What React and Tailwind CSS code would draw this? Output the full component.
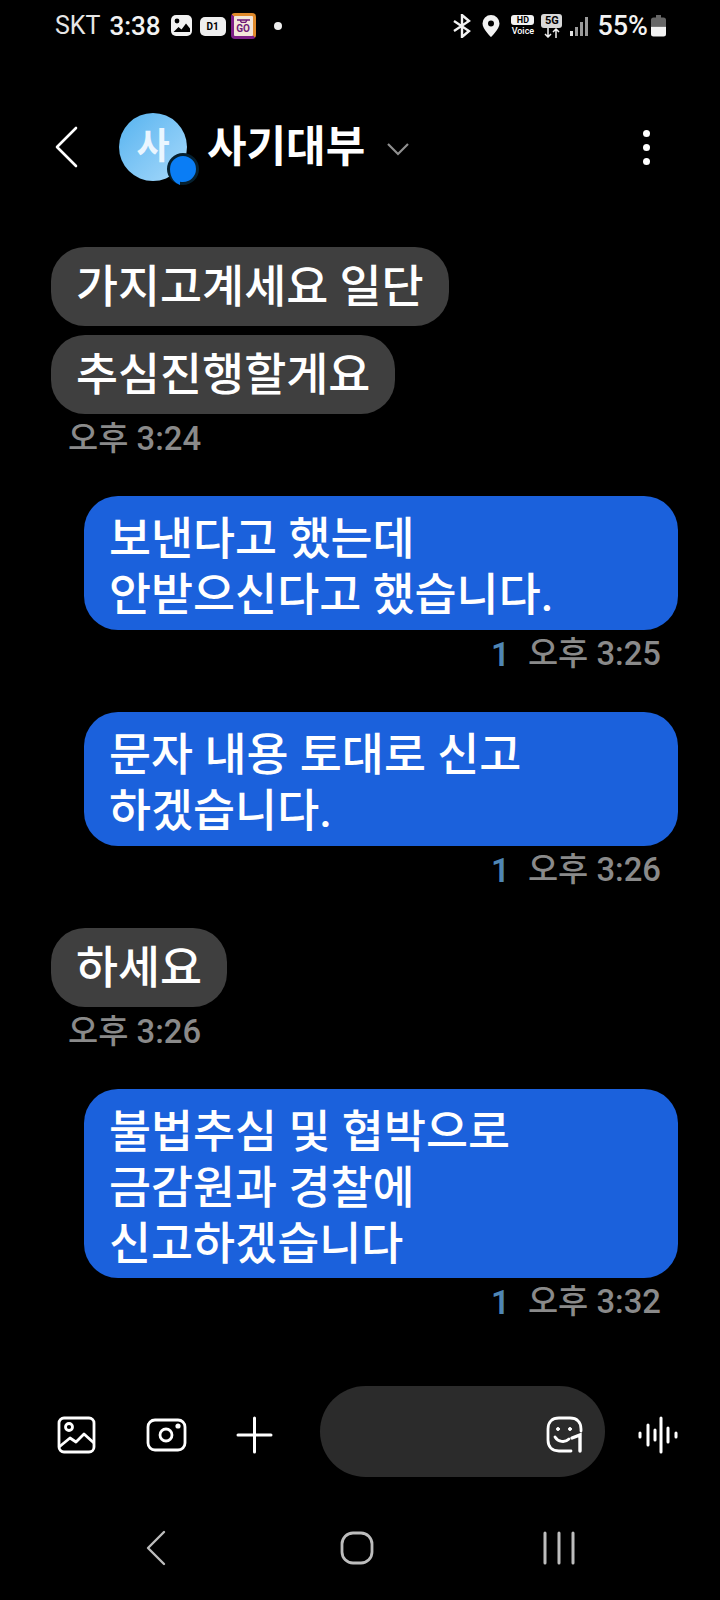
import React from 'react';

const font = { fontFamily: '"Roboto", "Noto Sans CJK KR", sans-serif' };

const Received = ({ lines, width }) => (
  <div className={`bg-[#3f3f3f] rounded-[34px] h-[79px] pl-[25px] pt-[4px] flex items-center text-[45.700px] font-medium text-white ${width}`}>
    {lines}
  </div>
);

const Sent = ({ lines, height }) => (
  <div className={`ml-[84px] w-[594px] bg-[#1b61dc] rounded-[34px] pl-[25px] pr-[25px] pt-[16px] text-[45.700px] leading-[56px] font-medium text-white ${height}`}>
    {lines.map((l) => (
      <div key={l}>{l}</div>
    ))}
  </div>
);

const SentTime = ({ time }) => (
  <div className="flex justify-end items-center gap-[18px] pr-[59px] pt-[3px] mt-[11px] h-[24px] text-[32.800px]">
    <span className="text-[#4f86b4] font-semibold text-[33px]">1</span>
    <span className="text-[#8a8a8a] font-medium">{time}</span>
  </div>
);

const RecvTime = ({ time }) => (
  <div className="pl-[17px] pt-[3px] mt-[12px] h-[24px] flex items-center text-[32.800px] font-medium text-[#8a8a8a]">{time}</div>
);

const StatusBar = () => (
  <div className="h-[52px] pl-[55px] pr-[54px] flex items-center justify-between text-white">
    <div className="flex items-center">
      <span className="text-[25px] text-[#e6e6e6]">SKT</span>
      <span className="text-[26px] font-medium ml-[9px] text-[#f2f2f2]">3:38</span>
      <svg className="ml-[10px]" width="22" height="22" viewBox="0 0 22 22">
        <rect x="0" y="0" width="21" height="21" rx="5" fill="#f2f2f2" />
        <circle cx="6" cy="6" r="2.4" fill="#000" />
        <path d="M2.5 17l5-5 3 2.5 4.5-6 4 5v3.5z" fill="#000" />
      </svg>
      <span className="ml-[7px] w-[26px] h-[19px] rounded-[5px] bg-[#efefef] text-black text-[10px] font-bold flex items-center justify-center">D1</span>
      <span className="ml-[5px] w-[25px] h-[26px] rounded-[4px] bg-gradient-to-tr from-[#7d1f86] from-50% to-[#e08a2b] to-50% p-[3px] flex">
        <span className="w-full h-full bg-[#f3e6da] rounded-[1px] text-[#6e1a78] text-[10px] leading-none font-bold flex flex-col items-center justify-end pb-[2px]">
          <svg className="mb-[1px]" width="13" height="4" viewBox="0 0 13 4" fill="none" stroke="#6e1a78" strokeWidth="1.400">
            <path d="M0 1h13M3 1l1.500 2.500h4L10 1" />
          </svg>
          GO
        </span>
      </span>
      <span className="ml-[18px] w-[8px] h-[8px] rounded-full bg-[#efefef]" />
    </div>
    <div className="flex items-center">
      <svg width="20" height="24" viewBox="0 0 20 24" fill="none" stroke="#f2f2f2" strokeWidth="2.4">
        <path d="M2 7l15 10-7 6V1l7 6L2 17" />
      </svg>
      <svg className="ml-[9px]" width="20" height="24" viewBox="0 0 20 24">
        <path fillRule="evenodd" d="M10 1a8.5 8.5 0 0 1 8.5 8.5C18.5 15 10 23 10 23S1.500 15 1.500 9.500A8.500 8.500 0 0 1 10 1zm0 5.500a3 3 0 1 0 0 6 3 3 0 0 0 0-6z" fill="#f2f2f2" />
      </svg>
      <div className="ml-[10px] w-[23px] flex flex-col items-center">
        <span className="w-[23px] h-[10px] rounded-[3px] bg-[#f2f2f2] text-black text-[9px] leading-[10px] font-bold text-center">HD</span>
        <span className="text-[9px] leading-[11px] mt-[1px] font-medium">Voice</span>
      </div>
      <div className="ml-[7px] w-[21px] flex flex-col items-center">
        <span className="w-[21px] h-[14px] rounded-[3px] bg-[#d8d8d8] text-black text-[11px] leading-[14px] font-bold text-center">5G</span>
        <svg width="16" height="10" viewBox="0 0 16 10" fill="none" stroke="#f2f2f2" strokeWidth="1.500">
          <path d="M4 0v9M1 6l3 3 3-3M12 10V1M9 4l3-3 3 3" />
        </svg>
      </div>
      <svg className="ml-[8px]" width="18" height="22" viewBox="0 0 18 22" fill="#9a9a9a">
        <rect x="0" y="16" width="3" height="5" fill="#e4e4e4" />
        <rect x="5" y="12" width="3" height="9" />
        <rect x="10" y="7" width="3" height="14" />
        <rect x="15" y="2" width="3" height="19" />
      </svg>
      <span className="ml-[9px] text-[27px] font-medium text-[#f2f2f2]">55%</span>
      <svg className="ml-[3px]" width="15" height="22" viewBox="0 0 15 22">
        <path d="M5 0h5v2.500h2.500A2.500 2.500 0 0 1 15 5v6H0V5a2.500 2.500 0 0 1 2.500-2.500H5z" fill="#666" />
        <path d="M0 11.500h15V19a2.500 2.500 0 0 1-2.500 2.500h-10A2.500 2.500 0 0 1 0 19z" fill="#f2f2f2" />
      </svg>
    </div>
  </div>
);

const Header = () => (
  <div className="mt-[60px] h-[70px] flex items-center relative text-white">
    <svg className="ml-[55px]" width="24" height="42" viewBox="0 0 24 42" fill="none" stroke="#fff" strokeWidth="2.600" strokeLinecap="round" strokeLinejoin="round">
      <path d="M21 2L2 21l19 19" />
    </svg>
    <div className="ml-[40px] relative w-[68px] h-[68px] rounded-full bg-gradient-to-br from-[#55b3ef] to-[#a5d9fb] flex items-center justify-center text-[36px] font-bold text-[#eaf6ff]">
      사
      <svg className="absolute left-[48px] top-[40px]" width="32" height="34" viewBox="0 0 32 34">
        <circle cx="16" cy="16" r="16" fill="#06202f" />
        <path d="M16 3a13 13 0 0 1 0 26c-1 0-2 0-3-.3V32c-5-2-10-7-10-16A13 13 0 0 1 16 3z" fill="#0a7df5" />
      </svg>
    </div>
    <span className="ml-[20px] text-[43px] font-bold">사기대부</span>
    <svg className="ml-[22px] mt-[3px]" width="22" height="14" viewBox="0 0 22 14" fill="none" stroke="#8f8f8f" strokeWidth="2.200">
      <path d="M1 2l10 10L21 2" />
    </svg>
    <div className="ml-auto mr-[70px] flex flex-col gap-[7px]">
      <span className="w-[7px] h-[7px] rounded-full bg-white" />
      <span className="w-[7px] h-[7px] rounded-full bg-white" />
      <span className="w-[7px] h-[7px] rounded-full bg-white" />
    </div>
  </div>
);

const Composer = () => (
  <div className="mt-[73px] h-[91px] flex items-center relative">
    <svg className="ml-[57px] mt-[6px]" width="39" height="38" viewBox="0 0 39 38" fill="none" stroke="#fff" strokeWidth="2.800" strokeLinejoin="round">
      <rect x="2" y="2" width="35" height="34" rx="5" />
      <circle cx="12" cy="11" r="3.500" />
      <path d="M2 31l11-9 6 4 8-8 10 9" />
    </svg>
    <svg className="ml-[50px] mt-[6px]" width="41" height="34" viewBox="0 0 41 34" fill="none" stroke="#fff" strokeWidth="2.800">
      <rect x="2" y="2" width="37" height="30" rx="7" />
      <circle cx="20" cy="17" r="6" />
      <circle cx="32" cy="8" r="1.200" fill="#fff" />
    </svg>
    <svg className="ml-[49px] mt-[6px]" width="37" height="38" viewBox="0 0 37 38" stroke="#fff" strokeWidth="3" strokeLinecap="round">
      <path d="M18.500 2v34M2 19h33" />
    </svg>
    <div className="ml-[47px] w-[285px] h-[91px] rounded-[46px] bg-[#2b2b2b] flex items-center justify-end pr-[22px] pt-[6px]">
      <svg width="37" height="37" viewBox="0 0 37 37" fill="none" stroke="#fff" strokeWidth="2.800" strokeLinecap="round">
        <path d="M25 35H13C6 35 2 31 2 24V13C2 6 6 2 13 2h11c7 0 11 4 11 11v2" />
        <circle cx="12" cy="13" r="1.500" fill="#fff" strokeWidth="1" />
        <circle cx="24" cy="13" r="1.500" fill="#fff" strokeWidth="1" />
        <path d="M9 21c3 5 10 6 14 2" />
        <path d="M26 22l8-3v16" strokeWidth="3.400" />
      </svg>
    </div>
    <svg className="ml-[33px] mt-[6px]" width="40" height="38" viewBox="0 0 40 38" stroke="#fff" strokeWidth="3" strokeLinecap="round">
      <path d="M2 17v4M10 9v20M17 14v10M23 2v34M30 12v14M38 17v4" />
    </svg>
  </div>
);

const NavBar = () => (
  <div className="mt-[53px] h-[36px] relative flex items-center">
    <svg className="ml-[146px]" width="20" height="36" viewBox="0 0 20 36" fill="none" stroke="#bdbdbd" strokeWidth="2.400" strokeLinecap="round" strokeLinejoin="round">
      <path d="M18 2L2 18l16 16" />
    </svg>
    <svg className="ml-[174px]" width="34" height="34" viewBox="0 0 34 34" fill="none" stroke="#bdbdbd" strokeWidth="2.800">
      <rect x="2" y="2" width="30" height="30" rx="11" />
    </svg>
    <svg className="ml-[169px]" width="32" height="34" viewBox="0 0 32 34" stroke="#bdbdbd" strokeWidth="3" strokeLinecap="round">
      <path d="M2 2v30M16 2v30M30 2v30" />
    </svg>
  </div>
);

export default function App() {
  return (
    <div className="w-[720px] h-[1600px] bg-black overflow-hidden" style={font}>
      <StatusBar />
      <Header />
      <div className="mt-[65px]">
        <div className="ml-[51px]">
          <Received lines="가지고계세요 일단" width="w-[398px]" />
          <div className="mt-[9px]">
            <Received lines="추심진행할게요" width="w-[344px]" />
          </div>
          <RecvTime time="오후 3:24" />
        </div>
        <div className="mt-[46px]">
          <Sent lines={['보낸다고 했는데', '안받으신다고 했습니다.']} height="h-[134px]" />
          <SentTime time="오후 3:25" />
        </div>
        <div className="mt-[47px]">
          <Sent lines={['문자 내용 토대로 신고', '하겠습니다.']} height="h-[134px]" />
          <SentTime time="오후 3:26" />
        </div>
        <div className="mt-[47px] ml-[51px]">
          <Received lines="하세요" width="w-[176px]" />
          <RecvTime time="오후 3:26" />
        </div>
        <div className="mt-[46px]">
          <Sent lines={['불법추심 및 협박으로', '금감원과 경찰에', '신고하겠습니다']} height="h-[189px]" />
          <SentTime time="오후 3:32" />
        </div>
      </div>
      <Composer />
      <NavBar />
    </div>
  );
}
